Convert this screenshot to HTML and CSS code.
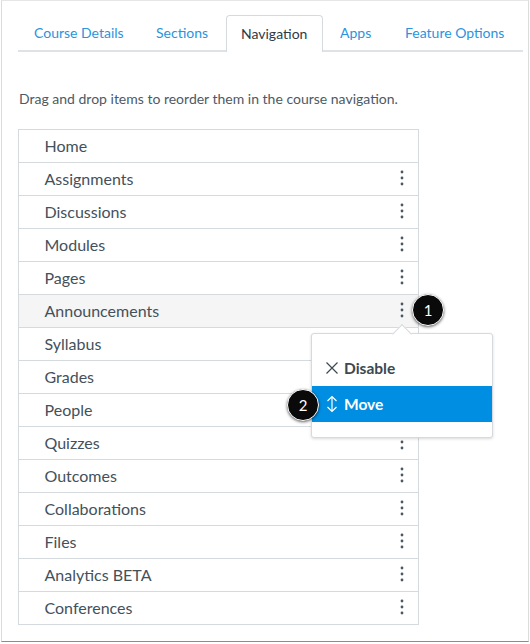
FILE: index.html
```html
<!DOCTYPE html>
<html lang="en">
<head>
<meta charset="utf-8">
<title>Navigation</title>
<link rel="stylesheet" href="styles.css">
</head>
<body>
<main class="frame">
  <nav class="tabs">
    <a class="tab tab-details">Course Details</a>
    <a class="tab tab-sections">Sections</a>
    <a class="tab tab-active">Navigation</a>
    <a class="tab tab-apps">Apps</a>
    <a class="tab tab-features">Feature Options</a>
  </nav>
  <p class="intro">Drag and drop items to reorder them in the course navigation.</p>
  <ul class="list">
    <li class="row"><span>Home</span></li>
    <li class="row"><span>Assignments</span><svg class="dots" viewBox="0 0 4 16"><circle cx="2" cy="2" r="1.4"/><circle cx="2" cy="8" r="1.4"/><circle cx="2" cy="14" r="1.4"/></svg></li>
    <li class="row"><span>Discussions</span><svg class="dots" viewBox="0 0 4 16"><circle cx="2" cy="2" r="1.4"/><circle cx="2" cy="8" r="1.4"/><circle cx="2" cy="14" r="1.4"/></svg></li>
    <li class="row"><span>Modules</span><svg class="dots" viewBox="0 0 4 16"><circle cx="2" cy="2" r="1.4"/><circle cx="2" cy="8" r="1.4"/><circle cx="2" cy="14" r="1.4"/></svg></li>
    <li class="row"><span>Pages</span><svg class="dots" viewBox="0 0 4 16"><circle cx="2" cy="2" r="1.4"/><circle cx="2" cy="8" r="1.4"/><circle cx="2" cy="14" r="1.4"/></svg></li>
    <li class="row row-hover"><span>Announcements</span><svg class="dots" viewBox="0 0 4 16"><circle cx="2" cy="2" r="1.4"/><circle cx="2" cy="8" r="1.4"/><circle cx="2" cy="14" r="1.4"/></svg></li>
    <li class="row"><span>Syllabus</span></li>
    <li class="row"><span>Grades</span></li>
    <li class="row"><span>People</span></li>
    <li class="row"><span>Quizzes</span><svg class="dots" viewBox="0 0 4 16"><circle cx="2" cy="2" r="1.4"/><circle cx="2" cy="8" r="1.4"/><circle cx="2" cy="14" r="1.4"/></svg></li>
    <li class="row"><span>Outcomes</span><svg class="dots" viewBox="0 0 4 16"><circle cx="2" cy="2" r="1.4"/><circle cx="2" cy="8" r="1.4"/><circle cx="2" cy="14" r="1.4"/></svg></li>
    <li class="row"><span>Collaborations</span><svg class="dots" viewBox="0 0 4 16"><circle cx="2" cy="2" r="1.4"/><circle cx="2" cy="8" r="1.4"/><circle cx="2" cy="14" r="1.4"/></svg></li>
    <li class="row"><span>Files</span><svg class="dots" viewBox="0 0 4 16"><circle cx="2" cy="2" r="1.4"/><circle cx="2" cy="8" r="1.4"/><circle cx="2" cy="14" r="1.4"/></svg></li>
    <li class="row"><span>Analytics BETA</span><svg class="dots" viewBox="0 0 4 16"><circle cx="2" cy="2" r="1.4"/><circle cx="2" cy="8" r="1.4"/><circle cx="2" cy="14" r="1.4"/></svg></li>
    <li class="row"><span>Conferences</span><svg class="dots" viewBox="0 0 4 16"><circle cx="2" cy="2" r="1.4"/><circle cx="2" cy="8" r="1.4"/><circle cx="2" cy="14" r="1.4"/></svg></li>
  </ul>
  <div class="menu">
    <div class="menu-item">
      <svg class="menu-icon" viewBox="0 0 14 18"><path d="M1.5 3.5 L12.5 14.5 M12.5 3.5 L1.5 14.5"/></svg>
      <span>Disable</span>
    </div>
    <div class="menu-item menu-item-active">
      <svg class="menu-icon" viewBox="0 0 14 18"><path d="M7 1.5 V16.5 M2.5 6 L7 1.5 L11.5 6 M2.5 12 L7 16.5 L11.5 12"/></svg>
      <span>Move</span>
    </div>
  </div>
  <div class="badge badge-one">1</div>
  <div class="badge badge-two">2</div>
</main>
</body>
</html>
```
FILE: styles.css
```css
* { box-sizing: border-box; }
html, body { margin: 0; padding: 0; }
body {
  width: 530px;
  height: 644px;
  overflow: hidden;
  background: #fff;
  font-family: Lato, "Open Sans", sans-serif;
  color: #2d3b45;
}
.frame {
  position: relative;
  width: 528px;
  height: 642px;
  margin-left: 1px;
  background: #fff;
  border: 1px solid #dcdcdc;
  border-top-color: #e6e6e6;
  border-bottom: 1px solid #8c8c8c;
  padding: 14px 4px 0 16px;
}
.tabs {
  display: flex;
  height: 37px;
  width: 505px;
  border-bottom: 2px solid #dfe3e6;
  font-size: 14px;
}
.tab {
  display: block;
  padding-top: 9px;
  color: #2a94dd;
}
.tab-details { padding-left: 16px; width: 123px; }
.tab-sections { width: 85px; padding-left: 15px; }
.tab-active {
  width: 97px;
  height: 37px;
  padding-left: 14px;
  color: #2d3b45;
  background: #fff;
  border: 1px solid #d5dade;
  border-bottom: 0;
  border-radius: 4px 4px 0 0;
}
.tab-apps { width: 82px; padding-left: 17px; }
.tab-features { padding-left: 0; }
.intro {
  margin: 38px 0 0;
  padding-left: 1px;
  font-size: 14px;
  line-height: 17px;
  color: #4b5a65;
}
.list {
  list-style: none;
  margin: 22px 0 0;
  padding: 0;
  width: 401px;
  border: 1px solid #d5dade;
  border-bottom: 0;
}
.row {
  display: flex;
  align-items: center;
  justify-content: space-between;
  height: 33px;
  padding: 0 14px 2px 25.5px;
  border-bottom: 1px solid #d5dade;
  font-size: 16px;
  color: #43515b;
}
.row-hover { background: #f5f5f5; }
.dots { width: 4px; height: 16px; fill: #4a5862; }
.menu {
  position: absolute;
  left: 309px;
  top: 332px;
  width: 182px;
  height: 105px;
  padding-top: 16px;
  background: #fff;
  border: 1px solid #d5dade;
  border-radius: 3px;
  box-shadow: 0 1px 3px rgba(0, 0, 0, 0.15);
}
.menu::before {
  content: "";
  position: absolute;
  left: 83px;
  top: -7px;
  width: 13px;
  height: 13px;
  background: #fff;
  border-left: 1px solid #d5dade;
  border-top: 1px solid #d5dade;
  transform: rotate(45deg);
}
.menu-item {
  display: flex;
  align-items: center;
  height: 36px;
  padding-left: 13px;
  font-size: 15.5px;
  font-weight: 700;
  color: #3b4954;
}
.menu-item-active {
  background: #008ee2;
  color: #fff;
}
.menu-icon {
  width: 14px;
  height: 18px;
  margin-right: 5px;
  fill: none;
  stroke: currentColor;
  stroke-width: 1.2;
}
.badge {
  position: absolute;
  display: flex;
  align-items: center;
  justify-content: center;
  width: 32px;
  height: 32px;
  border-radius: 50%;
  background: #0a0a0a;
  border: 1px solid #fff;
  color: #fff;
  font-size: 15px;
  box-shadow: 0 1px 3px rgba(0, 0, 0, 0.6);
}
.badge-one { left: 410px; top: 293px; }
.badge-two { left: 285px; top: 388px; }
```
